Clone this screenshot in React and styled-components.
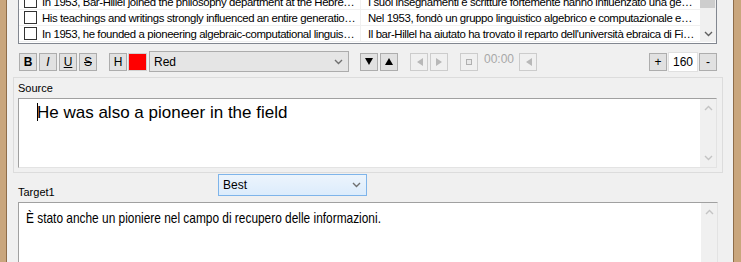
import React from 'react';
import styled, { createGlobalStyle } from 'styled-components';

const GlobalStyle = createGlobalStyle`
  html, body { margin: 0; padding: 0; overflow: hidden; }
  body {
    background: #c9a67d;
    font-family: "Liberation Sans", Arial, sans-serif;
    font-size: 12px;
    color: #000;
  }
`;

const rows = [
  {
    en: 'In 1953, Bar-Hillel joined the philosophy department at the Hebre…',
    it: 'I suoi insegnamenti e scritture fortemente hanno influenzato una ge…',
  },
  {
    en: 'His teachings and writings strongly influenced an entire generatio…',
    it: 'Nel 1953, fondò un gruppo linguistico algebrico e computazionale e…',
  },
  {
    en: 'In 1953, he founded a pioneering algebraic-computational linguis…',
    it: 'Il bar-Hillel ha aiutato ha trovato il reparto dell\'università ebraica di Fi…',
  },
];

const Chevron = ({ up, color = '#a0a0a0' }) => (
  <svg width="9" height="6" viewBox="0 0 9 6">
    <polyline
      points={up ? '1,5 4.5,1.5 8,5' : '1,1 4.5,4.5 8,1'}
      fill="none"
      stroke={color}
      strokeWidth="1.4"
    />
  </svg>
);

const Tri = ({ dir, color }) => {
  const pts = {
    down: '0,1 8,1 4,8',
    up: '0,8 8,8 4,1',
    left: '8,1 8,9 2,5',
    right: '1,1 1,9 7,5',
  }[dir];
  return (
    <svg width="9" height="10" viewBox="0 0 9 10">
      <polygon points={pts} fill={color} />
    </svg>
  );
};

const App = () => {
  return (
    <>
      <GlobalStyle />
      <Frame>
        <Window>
          <List>
            <Rows>
              {rows.map((r, i) => (
                <Row key={i}>
                  <Cell $first>
                    <Check />
                    <CellText>{r.en}</CellText>
                  </Cell>
                  <Cell>
                    <CellText>{r.it}</CellText>
                  </Cell>
                </Row>
              ))}
            </Rows>
            <ScrollBar>
              <Thumb />
              <ArrowBox>
                <Chevron color="#606060" />
              </ArrowBox>
            </ScrollBar>
          </List>

          <Toolbar>
            <Btn style={{ fontWeight: 'bold' }}>B</Btn>
            <Btn style={{ fontStyle: 'italic' }}>I</Btn>
            <Btn style={{ textDecoration: 'underline' }}>U</Btn>
            <Btn style={{ textDecoration: 'line-through' }}>S</Btn>
            <Btn $gap={12}>H</Btn>
            <Swatch />
            <Select $w={200}>
              <span>Red</span>
              <Chevron color="#707070" />
            </Select>
            <Btn $gap={11}>
              <Tri dir="down" color="#000" />
            </Btn>
            <Btn>
              <Tri dir="up" color="#000" />
            </Btn>
            <Btn $gap={12} $disabled>
              <Tri dir="left" color="#b8b8b8" />
            </Btn>
            <Btn $disabled>
              <Tri dir="right" color="#b8b8b8" />
            </Btn>
            <Btn $gap={12} $disabled>
              <StopIcon />
            </Btn>
            <Time>00:00</Time>
            <Btn $gap={5} $disabled>
              <Tri dir="left" color="#b8b8b8" />
            </Btn>
            <Spacer />
            <Btn>+</Btn>
            <NumBox>160</NumBox>
            <Btn $gap={1}>-</Btn>
          </Toolbar>

          <Panel>
            <Label>Source</Label>
            <TextArea>
              <EditorText $source>
                <Caret />
                He was also a pioneer in the field
              </EditorText>
              <VScroll>
                <Chevron up color="#c4c4c4" />
                <Chevron color="#c4c4c4" />
              </VScroll>
            </TextArea>
          </Panel>

          <TargetSection>
            <TargetHead>
              <Label>Target1</Label>
              <BlueSelect>
                <span>Best</span>
                <Chevron color="#707070" />
              </BlueSelect>
            </TargetHead>
            <TextArea $tall>
              <EditorText>
                <Narrow>È stato anche un pioniere nel campo di recupero delle informazioni.</Narrow>
              </EditorText>
              <VScroll>
                <Chevron up color="#c4c4c4" />
                <Chevron color="#c4c4c4" />
              </VScroll>
            </TextArea>
          </TargetSection>
        </Window>
      </Frame>
    </>
  );
};

const Frame = styled.div`
  height: 262px;
  display: flex;
  padding: 0 7px 0 6px;
  background: #c9a67d;
  box-sizing: border-box;
`;

const Window = styled.div`
  flex: 1;
  min-width: 0;
  display: flex;
  flex-direction: column;
  background: #f0f0f0;
  border-left: 1px solid #8e6d4a;
  border-right: 1px solid #8e6d4a;
  padding: 0 10px 0 6px;
  overflow: hidden;
`;

const List = styled.div`
  display: flex;
  margin: -6px 6px 0 5px;
  background: #fff;
  border: 1px solid #828790;
  border-top: none;
  padding-bottom: 1px;
`;

const Rows = styled.div`
  flex: 1;
  min-width: 0;
  display: flex;
  flex-direction: column;
`;

const Row = styled.div`
  display: flex;
  height: 16px;
  box-sizing: border-box;
  border-bottom: 1px solid #f0f0f0;
`;

const Cell = styled.div`
  display: flex;
  align-items: center;
  gap: 5px;
  min-width: 0;
  box-sizing: border-box;
  width: ${(p) => (p.$first ? '342px' : 'auto')};
  flex: ${(p) => (p.$first ? 'none' : '1')};
  padding-left: ${(p) => (p.$first ? '5px' : '7px')};
  border-right: ${(p) => (p.$first ? '1px solid #f0f0f0' : 'none')};
`;

const Check = styled.span`
  flex: none;
  width: 13px;
  height: 13px;
  box-sizing: border-box;
  border: 1px solid #333;
  background: #fff;
`;

const CellText = styled.span`
  white-space: nowrap;
  overflow: hidden;
  font-size: 11.4px;
  letter-spacing: -0.4px;
`;

const ScrollBar = styled.div`
  width: 16px;
  flex: none;
  display: flex;
  flex-direction: column;
  background: #f0f0f0;
`;

const Thumb = styled.div`
  height: 14px;
  margin: 0 1px 0 0;
  background: #cdcdcd;
`;

const ArrowBox = styled.div`
  margin-top: auto;
  height: 17px;
  display: flex;
  align-items: center;
  justify-content: center;
`;

const Toolbar = styled.div`
  display: flex;
  align-items: center;
  height: 21px;
  margin: 7px 6px 0 6px;
`;

const Btn = styled.div`
  flex: none;
  width: 18px;
  height: 18px;
  box-sizing: border-box;
  margin-left: ${(p) => (p.$gap != null ? p.$gap : 2)}px;
  display: flex;
  align-items: center;
  justify-content: center;
  background: ${(p) => (p.$disabled ? '#f0f0f0' : '#e1e1e1')};
  border: 1px solid ${(p) => (p.$disabled ? '#cccccc' : '#adadad')};
  font-size: 12px;
  color: #000;

  &:first-child {
    margin-left: 0;
  }
`;

const Swatch = styled.div`
  flex: none;
  width: 19px;
  height: 18px;
  margin-left: 1px;
  box-sizing: border-box;
  border: 1px solid #d0d0d0;
  background: #ff0000;
`;

const Select = styled.div`
  flex: none;
  width: ${(p) => p.$w}px;
  height: 21px;
  margin-left: 2px;
  box-sizing: border-box;
  display: flex;
  align-items: center;
  justify-content: space-between;
  padding: 0 5px 0 4px;
  background: #e5e5e5;
  border: 1px solid #acacac;
`;

const StopIcon = styled.span`
  width: 4px;
  height: 4px;
  border: 1px solid #b0b0b0;
  background: #e8e8e8;
`;

const Time = styled.span`
  align-self: flex-start;
  margin: 1px 0 0 6px;
  color: #a8a8a8;
`;

const Spacer = styled.div`
  flex: 1;
`;

const NumBox = styled.div`
  flex: none;
  width: 30px;
  height: 20px;
  margin-left: 1px;
  box-sizing: border-box;
  display: flex;
  align-items: center;
  justify-content: center;
  background: #fff;
  border: 1px solid #e0e0e0;
  font-size: 12px;
`;

const Panel = styled.div`
  margin-top: 5px;
  border: 1px solid #dcdcdc;
  padding: 0 5px 4px 4px;
  display: flex;
  flex-direction: column;
`;

const Label = styled.div`
  height: 20px;
  display: flex;
  align-items: center;
  font-size: 11px;
`;

const TextArea = styled.div`
  display: flex;
  height: ${(p) => (p.$tall ? '80px' : '70px')};
  box-sizing: border-box;
  background: #fff;
  border-top: 1px solid #a0a0a0;
  border-left: 1px solid #a0a0a0;
  border-right: 1px solid #e3e3e3;
  border-bottom: 1px solid #e3e3e3;
`;

const EditorText = styled.div`
  flex: 1;
  position: relative;
  padding: ${(p) => (p.$source ? '4px 0 0 18px' : '6px 0 0 7px')};
  font-size: ${(p) => (p.$source ? '17px' : '14.5px')};
  line-height: 19px;
  white-space: nowrap;
`;

const Narrow = styled.span`
  display: inline-block;
  transform: scaleX(0.82);
  transform-origin: left center;
`;

const Caret = styled.span`
  position: absolute;
  left: 18px;
  top: 4px;
  width: 1px;
  height: 18px;
  background: #000;
`;

const VScroll = styled.div`
  width: 16px;
  flex: none;
  display: flex;
  flex-direction: column;
  align-items: center;
  justify-content: space-between;
  padding: 6px 0;
  background: #f0f0f0;
`;

const TargetSection = styled.div`
  margin: 1px 5px 0 5px;
  display: flex;
  flex-direction: column;
`;

const TargetHead = styled.div`
  display: flex;
  align-items: flex-end;
  height: 28px;

  & > ${Label} {
    width: 200px;
  }
`;

const BlueSelect = styled.div`
  align-self: flex-start;
  width: 149px;
  height: 22px;
  box-sizing: border-box;
  display: flex;
  align-items: center;
  justify-content: space-between;
  padding: 0 5px 0 4px;
  border: 1px solid #7eb4ea;
  background: linear-gradient(#ecf4fc, #dcecfc);
  font-size: 12px;
`;

export default App;
